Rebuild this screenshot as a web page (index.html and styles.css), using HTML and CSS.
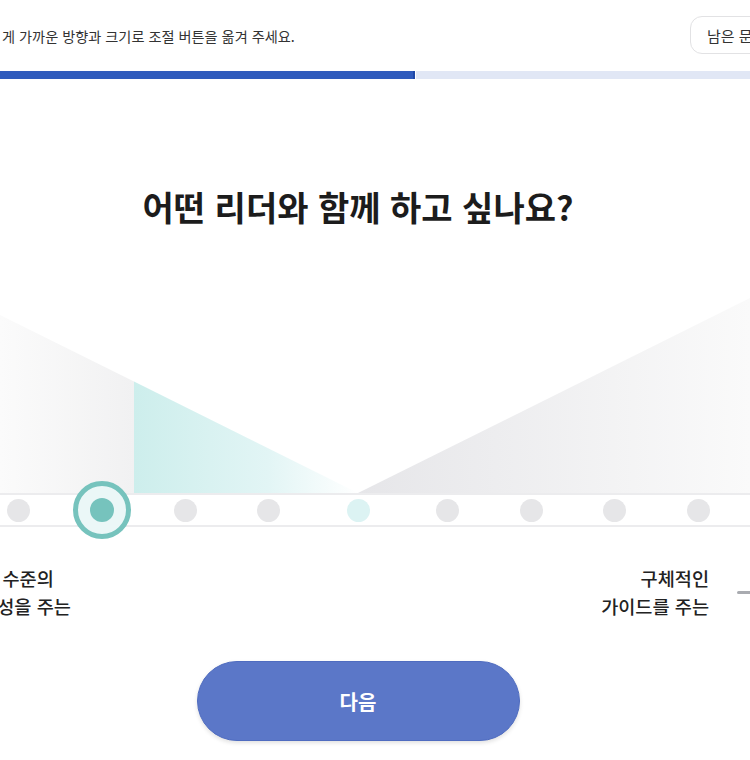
FILE: index.html
```html
<!DOCTYPE html>
<html lang="ko">
<head>
    <meta charset="UTF-8">
    <meta name="viewport" content="width=device-width, initial-scale=1.0">
    <title>리더십 유형 검사</title>
    <link rel="stylesheet" href="styles.css">
</head>
<body>
    <div class="page">
        <header class="top">
            <p class="guide">게 가까운 방향과 크기로 조절 버튼을 옮겨 주세요.</p>
            <button class="remain">남은 문항 9개</button>
        </header>
        <div class="progress"><div class="progress-fill"></div></div>

        <main class="question">
            <h1>어떤 리더와 함께 하고 싶나요?</h1>

            <svg class="chart" width="750" height="213" viewBox="0 0 750 213">
                <defs>
                    <linearGradient id="g-left" x1="0" x2="1" y1="0" y2="0">
                        <stop offset="0" stop-color="#fbfbfb"/>
                        <stop offset="1" stop-color="#f1f1f2"/>
                    </linearGradient>
                    <linearGradient id="g-teal" x1="0" x2="1" y1="0" y2="0">
                        <stop offset="0" stop-color="#cdeeec"/>
                        <stop offset="0.6" stop-color="#e2f5f5"/>
                        <stop offset="1" stop-color="#ffffff"/>
                    </linearGradient>
                    <linearGradient id="g-right" x1="0" x2="1" y1="0" y2="0">
                        <stop offset="0" stop-color="#e6e6e9"/>
                        <stop offset="1" stop-color="#fafafa"/>
                    </linearGradient>
                </defs>
                <polygon points="0,35 134,101.6 134,213 0,213" fill="url(#g-left)"/>
                <polygon points="134,101.6 358,213 134,213" fill="url(#g-teal)"/>
                <polygon points="358,213 750,18 750,213" fill="url(#g-right)"/>
            </svg>
        </main>

        <div class="track">
            <span class="slot"><span class="dot"></span></span>
            <span class="slot"><span class="ring"><span class="dot on"></span></span></span>
            <span class="slot"><span class="dot"></span></span>
            <span class="slot"><span class="dot"></span></span>
            <span class="slot mid"><span class="dot neutral"></span></span>
            <span class="slot"><span class="dot"></span></span>
            <span class="slot"><span class="dot"></span></span>
            <span class="slot"><span class="dot"></span></span>
            <span class="slot"><span class="dot"></span></span>
        </div>

        <div class="labels">
            <p class="label">높은 수준의<br>자율성을 주는</p>
            <p class="label right">구체적인<br>가이드를 주는</p>
            <span class="dash"></span>
        </div>

        <div class="actions">
            <button class="next">다음</button>
        </div>
    </div>
</body>
</html>
```

FILE: styles.css
```css
/* 기본 */
html, body {
    margin: 0;
    padding: 0;
    overflow: hidden;
    background: #fff;
}
body {
    font-family: "Noto Sans CJK KR", "Noto Sans", sans-serif;
    color: #222;
}
.page {
    width: 750px;
    height: 760px;
    overflow: hidden;
}

/* 상단 */
.top {
    display: flex;
    align-items: center;
    justify-content: space-between;
    width: 790px;
    height: 71px;
}
.guide {
    margin: 0 0 0 2px;
    font-size: 14.2px;
    color: #333;
}
.remain {
    flex-shrink: 0;
    width: 100px;
    height: 38px;
    margin-bottom: 1px;
    padding: 0 0 0 16px;
    text-align: left;
    white-space: nowrap;
    font-family: inherit;
    font-size: 15px;
    color: #333;
    background: #fff;
    border: 1px solid #e2e2e4;
    border-radius: 12px;
}
.progress {
    height: 8px;
    background: #e1e7f5;
}
.progress-fill {
    width: 413px;
    height: 100%;
    background: #2f5bbd;
    border-right: 2px solid #1e48a8;
    box-shadow: 1px 0 0 #fff;
}

/* 질문 */
.question {
    display: flex;
    flex-direction: column;
}
.question h1 {
    margin: 106px 34px 0 0;
    text-align: center;
    font-size: 34px;
    line-height: 44px;
    font-weight: 700;
    color: #1c1c1c;
}
.chart {
    display: block;
    margin-top: 51px;
}

/* 슬라이더 */
.track {
    display: flex;
    align-items: center;
    gap: 59.5px;
    height: 30px;
    padding-left: 6px;
    border-top: 2px solid #ececee;
    border-bottom: 2px solid #ececee;
}
.slot {
    display: flex;
    align-items: center;
    justify-content: center;
    flex-shrink: 0;
    width: 24px;
    height: 24px;
}
.slot.mid {
    margin: 0 6px;
}
.dot {
    flex-shrink: 0;
    width: 23px;
    height: 23px;
    border-radius: 50%;
    background: #e6e6e8;
}
.dot.neutral {
    background: #dcf3f3;
}
.dot.on {
    width: 24px;
    height: 24px;
    background: #76c3bd;
}
.ring {
    display: flex;
    align-items: center;
    justify-content: center;
    flex-shrink: 0;
    width: 48px;
    height: 48px;
    border: 5px solid #76c3bd;
    border-radius: 50%;
    background: #ebf7f7;
}

/* 라벨 */
.labels {
    display: flex;
    align-items: center;
    margin: 37px 0 0 -37px;
}
.label {
    margin: 0;
    font-size: 18.6px;
    line-height: 28px;
    font-weight: 500;
    color: #222;
    white-space: nowrap;
}
.label.right {
    margin-left: auto;
    text-align: right;
}
.dash {
    flex-shrink: 0;
    width: 24px;
    height: 3px;
    margin: 0 -11px 0 28px;
    background: #a9abb0;
    border-radius: 2px;
}

/* 버튼 */
.actions {
    display: flex;
    justify-content: center;
    margin: 41px 34px 0 0;
}
.next {
    width: 323px;
    height: 80px;
    font-family: inherit;
    font-size: 20px;
    font-weight: 700;
    color: #fff;
    background: #5b77c8;
    border: 1px solid #4f6cc0;
    border-radius: 40px;
    box-shadow: 0 2px 4px rgba(0, 0, 0, 0.12);
    cursor: pointer;
}
```
